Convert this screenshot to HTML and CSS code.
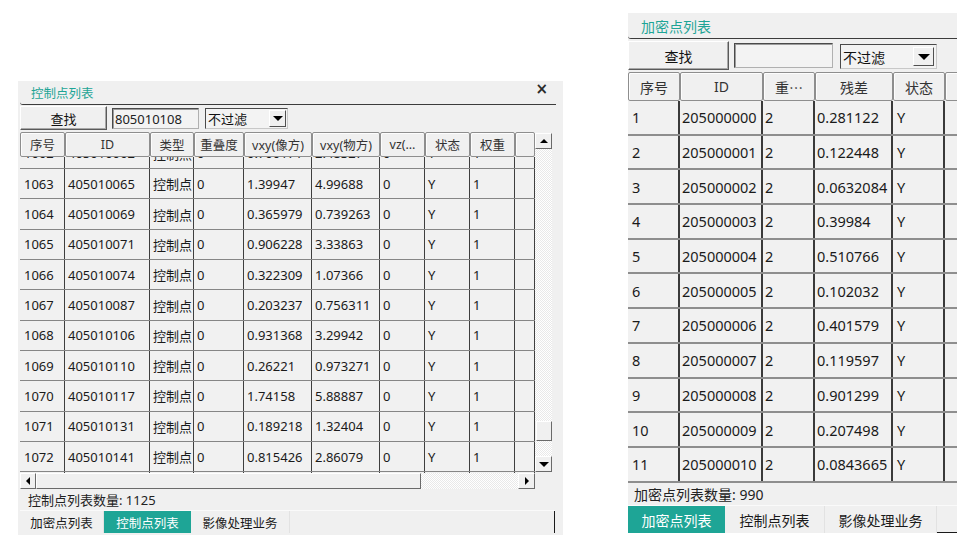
FILE: index.html
```html
<!DOCTYPE html>
<html lang="zh-CN">
<head>
<meta charset="utf-8">
<title>点列表</title>
<link rel="stylesheet" href="styles.css">
</head>
<body>
<div class="desk">
  <section class="panel panel-ctrl">
    <div class="titlebar"><span class="title">控制点列表</span><span class="close">×</span></div>
    <div class="toolbar">
      <button class="btn">查找</button>
      <div class="field">805010108</div>
      <div class="combo"><span class="combo-text">不过滤</span><span class="combo-btn"><i class="tri tri-down"></i></span></div>
    </div>
    <div class="tablebox">
      <div class="tablemain">
        <div class="hdr">
          <div class="hc">序号</div><div class="hc">ID</div><div class="hc">类型</div><div class="hc">重叠度</div><div class="hc">vxy(像方)</div><div class="hc">vxy(物方)</div><div class="hc">vz(…</div><div class="hc">状态</div><div class="hc">权重</div><div class="hc"></div>
        </div>
        <div class="body">
          <div class="rows">
            <div class="row"><div>1062</div><div>405010062</div><div>控制点</div><div>0</div><div>0.700171</div><div>2.48327</div><div>0</div><div>Y</div><div>1</div><div></div></div>
            <div class="row"><div>1063</div><div>405010065</div><div>控制点</div><div>0</div><div>1.39947</div><div>4.99688</div><div>0</div><div>Y</div><div>1</div><div></div></div>
            <div class="row"><div>1064</div><div>405010069</div><div>控制点</div><div>0</div><div>0.365979</div><div>0.739263</div><div>0</div><div>Y</div><div>1</div><div></div></div>
            <div class="row"><div>1065</div><div>405010071</div><div>控制点</div><div>0</div><div>0.906228</div><div>3.33863</div><div>0</div><div>Y</div><div>1</div><div></div></div>
            <div class="row"><div>1066</div><div>405010074</div><div>控制点</div><div>0</div><div>0.322309</div><div>1.07366</div><div>0</div><div>Y</div><div>1</div><div></div></div>
            <div class="row"><div>1067</div><div>405010087</div><div>控制点</div><div>0</div><div>0.203237</div><div>0.756311</div><div>0</div><div>Y</div><div>1</div><div></div></div>
            <div class="row"><div>1068</div><div>405010106</div><div>控制点</div><div>0</div><div>0.931368</div><div>3.29942</div><div>0</div><div>Y</div><div>1</div><div></div></div>
            <div class="row"><div>1069</div><div>405010110</div><div>控制点</div><div>0</div><div>0.26221</div><div>0.973271</div><div>0</div><div>Y</div><div>1</div><div></div></div>
            <div class="row"><div>1070</div><div>405010117</div><div>控制点</div><div>0</div><div>1.74158</div><div>5.88887</div><div>0</div><div>Y</div><div>1</div><div></div></div>
            <div class="row"><div>1071</div><div>405010131</div><div>控制点</div><div>0</div><div>0.189218</div><div>1.32404</div><div>0</div><div>Y</div><div>1</div><div></div></div>
            <div class="row"><div>1072</div><div>405010141</div><div>控制点</div><div>0</div><div>0.815426</div><div>2.86079</div><div>0</div><div>Y</div><div>1</div><div></div></div>
            <div class="row"><div>1073</div><div>405010150</div><div>控制点</div><div>0</div><div>0.512004</div><div>1.86213</div><div>0</div><div>Y</div><div>1</div><div></div></div>
          </div>
        </div>
      </div>
      <div class="vscroll">
        <div class="sbtn"><i class="tri tri-up"></i></div>
        <div class="vtrack">
          <div class="vgap"></div>
          <div class="vthumb"></div>
          <div class="vrest"></div>
        </div>
        <div class="sbtn"><i class="tri tri-down"></i></div>
      </div>
      <div class="hscroll">
        <div class="sbtn hbtn"><i class="tri tri-left"></i></div>
        <div class="hthumb"></div>
        <div class="htrack"></div>
        <div class="sbtn hbtn hbtn-r"><i class="tri tri-right"></i></div>
      </div>
      <div class="corner"></div>
    </div>
    <div class="status">控制点列表数量: 1125</div>
    <div class="tabs">
      <div class="tab">加密点列表</div>
      <div class="tab active">控制点列表</div>
      <div class="tab">影像处理业务</div>
      <div class="tab-fill"></div>
    </div>
  </section>

  <section class="panel panel-dense">
    <div class="titlebar"><span class="title">加密点列表</span></div>
    <div class="toolbar">
      <button class="btn">查找</button>
      <div class="field"></div>
      <div class="combo"><span class="combo-text">不过滤</span><span class="combo-btn"><i class="tri tri-down"></i></span></div>
    </div>
    <div class="tablemain">
      <div class="hdr">
        <div class="hc">序号</div><div class="hc">ID</div><div class="hc cjk">重…</div><div class="hc">残差</div><div class="hc">状态</div><div class="hc"></div>
      </div>
      <div class="body">
        <div class="rows">
          <div class="row"><div>1</div><div>205000000</div><div>2</div><div>0.281122</div><div>Y</div><div></div></div>
          <div class="row"><div>2</div><div>205000001</div><div>2</div><div>0.122448</div><div>Y</div><div></div></div>
          <div class="row"><div>3</div><div>205000002</div><div>2</div><div>0.0632084</div><div>Y</div><div></div></div>
          <div class="row"><div>4</div><div>205000003</div><div>2</div><div>0.39984</div><div>Y</div><div></div></div>
          <div class="row"><div>5</div><div>205000004</div><div>2</div><div>0.510766</div><div>Y</div><div></div></div>
          <div class="row"><div>6</div><div>205000005</div><div>2</div><div>0.102032</div><div>Y</div><div></div></div>
          <div class="row"><div>7</div><div>205000006</div><div>2</div><div>0.401579</div><div>Y</div><div></div></div>
          <div class="row"><div>8</div><div>205000007</div><div>2</div><div>0.119597</div><div>Y</div><div></div></div>
          <div class="row"><div>9</div><div>205000008</div><div>2</div><div>0.901299</div><div>Y</div><div></div></div>
          <div class="row"><div>10</div><div>205000009</div><div>2</div><div>0.207498</div><div>Y</div><div></div></div>
          <div class="row"><div>11</div><div>205000010</div><div>2</div><div>0.0843665</div><div>Y</div><div></div></div>
        </div>
      </div>
    </div>
    <div class="status">加密点列表数量: 990</div>
    <div class="tabs">
      <div class="tab active">加密点列表</div>
      <div class="tab">控制点列表</div>
      <div class="tab">影像处理业务</div>
      <div class="tab-fill"></div>
    </div>
  </section>
</div>
</body>
</html>
```

FILE: styles.css
```css
* { box-sizing: border-box; }

html, body {
  margin: 0;
  background: #ffffff;
}

body {
  width: 970px;
  height: 544px;
  overflow: hidden;
  font-family: "Noto Sans", "Noto Sans CJK SC", sans-serif;
  color: #1a1a1a;
}

.desk {
  display: flex;
  align-items: flex-start;
}

.panel {
  background: #f0f0f0;
  overflow: hidden;
  display: flex;
  flex-direction: column;
}

/* ---------- shared pieces ---------- */
.titlebar {
  display: flex;
  align-items: center;
  justify-content: space-between;
  border-bottom: 1px solid #3c3c3c;
  border-bottom-left-radius: 3px;
}
.title { color: #1ea596; }
.close { font-weight: bold; color: #2a2a2a; font-family: "DejaVu Sans", sans-serif; }

.toolbar { display: flex; align-items: flex-start; }

.btn {
  font: inherit;
  color: #111;
  background: #f0f0f0;
  border: 1px solid;
  border-color: #ffffff #5a5a5a #5a5a5a #ffffff;
  box-shadow: inset -1px -1px 0 #a8a8a8;
  padding: 0;
}

.field {
  background: #f3f3f3;
  border: 1px solid;
  border-color: #4a4a4a #b0b0b0 #b0b0b0 #4a4a4a;
  box-shadow: inset 1px 1px 0 #9c9c9c;
  display: flex;
  align-items: center;
  color: #222;
}

.combo {
  background: #f3f3f3;
  border: 1px solid;
  border-color: #4a4a4a #c8c8c8 #c8c8c8 #4a4a4a;
  display: flex;
  align-items: center;
  justify-content: space-between;
  color: #111;
}
.combo-btn {
  display: flex;
  align-items: center;
  justify-content: center;
  background: #f0f0f0;
  border: 1px solid;
  border-color: #ffffff #505050 #505050 #ffffff;
}

.tri { display: block; width: 0; height: 0; border-style: solid; }
.tri-down { border-width: 5px 5px 0 5px; border-color: #000 transparent transparent transparent; }
.tri-up { border-width: 0 4px 4px 4px; border-color: transparent transparent #000 transparent; }
.tri-left { border-width: 4px 4px 4px 0; border-color: transparent #000 transparent transparent; }
.tri-right { border-width: 4px 0 4px 4px; border-color: transparent transparent transparent #000; }

.hdr { display: grid; }
.hc {
  background: #f0f0f0;
  border: 1px solid #8e8e8e;
  border-radius: 2px;
  box-shadow: inset 1px 1px 0 #fdfdfd;
  display: flex;
  align-items: center;
  justify-content: center;
  white-space: nowrap;
  overflow: hidden;
  color: #333;
}
.cjk { font-family: "Noto Sans CJK SC", sans-serif; }

.body { overflow: hidden; background: #f1f1f1; }
.row {
  display: grid;
  border-bottom: 1px solid #868686;
}
.row > div {
  border-right: 1px solid #3f3f3f;
  display: flex;
  align-items: center;
  white-space: nowrap;
  overflow: hidden;
}

.status { display: flex; align-items: center; color: #222; }

.tabs {
  display: flex;
  border-top: 1px solid #fafafa;
}
.tab {
  display: flex;
  align-items: center;
  justify-content: center;
  background: #f0f0f0;
  border-right: 1px solid #e2e2e2;
  color: #1a1a1a;
}
.tab.active { background: #1ea596; color: #ffffff; border-right: 0; }
.tab-fill { flex: 1; }

/* ---------- control point panel (left) ---------- */
.panel-ctrl {
  width: 545px;
  height: 454px;
  margin: 81px 0 0 18px;
  padding: 0 8px 0 2px;
  font-size: 13px;
}
.panel-ctrl .titlebar {
  height: 24px;
  padding: 0 8px 0 11px;
  margin-right: -1px;
}
.panel-ctrl .title { font-size: 12.5px; }
.panel-ctrl .close { font-size: 15px; line-height: 1; margin-top: -7px; }
.panel-ctrl .toolbar { height: 24px; margin-top: 1px; gap: 5px; }
.panel-ctrl .btn { width: 87px; height: 24px; font-size: 13px; }
.panel-ctrl .field { width: 87px; height: 21px; margin-top: 2px; padding-left: 2px; font-size: 13px; }
.panel-ctrl .combo { width: 83px; height: 21px; margin-top: 2px; margin-left: 1px; padding-left: 2px; font-size: 13px; }
.panel-ctrl .combo-btn { width: 17px; height: 17px; margin-right: 1px; }
.panel-ctrl .combo-btn .tri-down { border-width: 5px 5px 0 5px; }

.tablebox {
  margin-top: 2px;
  display: grid;
  grid-template-columns: 515px 17px;
  grid-template-rows: 341px 16px;
}
.panel-ctrl .tablemain { display: flex; flex-direction: column; overflow: hidden; }
.panel-ctrl .hdr,
.panel-ctrl .row {
  grid-template-columns: 45px 85px 44px 50px 68px 68px 45px 45px 45px 20px;
}
.panel-ctrl .hdr { height: 25px; }
.panel-ctrl .hc { font-size: 12.5px; }
.panel-ctrl .body { flex: 1; }
.panel-ctrl .rows { margin-top: -18.3px; }
.panel-ctrl .row { height: 30.33px; }
.panel-ctrl .row > div { padding-left: 3px; }
.panel-ctrl .row > div:first-child { padding-left: 4px; }

.vscroll {
  display: flex;
  flex-direction: column;
  padding-top: 1px;
  padding-bottom: 1px;
}
.sbtn {
  flex: none;
  height: 16px;
  display: flex;
  align-items: center;
  justify-content: center;
  background: #f0f0f0;
  border: 1px solid;
  border-color: #ffffff #6a6a6a #6a6a6a #ffffff;
}
.vtrack { flex: 1; display: flex; flex-direction: column; }
.vgap, .vrest, .htrack {
  background: repeating-conic-gradient(#ffffff 0 25%, #e9e9e9 0 50%) 0 0 / 2px 2px;
}
.vgap { flex: 1; }
.vthumb {
  height: 20px;
  background: #f0f0f0;
  border: 1px solid;
  border-color: #ffffff #6a6a6a #6a6a6a #ffffff;
  margin: 0 0 0 1px;
}
.vrest { height: 15px; }

.hscroll { display: flex; }
.hbtn { width: 16px; height: 16px; }
.hbtn-r { width: 17px; }
.hthumb {
  width: 385px;
  background: #f0f0f0;
  border: 1px solid;
  border-color: #ffffff #6a6a6a #6a6a6a #ffffff;
}
.htrack { flex: 1; }
.corner { background: #f0f0f0; }

.panel-ctrl .status { height: 21px; padding-left: 8px; font-size: 13px; }
.panel-ctrl .tabs { height: 23px; font-size: 12.5px; }
.panel-ctrl .tab:nth-child(1) { width: 84px; }
.panel-ctrl .tab:nth-child(2) { width: 87px; }
.panel-ctrl .tab:nth-child(3) { width: 99px; }
.panel-ctrl .tab-fill { border-right: 1px solid #1a1a1a; }

/* ---------- dense point panel (right) ---------- */
.panel-dense {
  width: 329px;
  height: 520px;
  margin: 13px 0 0 65px;
  font-size: 14.5px;
}
.panel-dense .titlebar { height: 26px; padding-left: 13px; }
.panel-dense .title { font-size: 14px; }
.panel-dense .toolbar { height: 31px; margin-top: 2px; }
.panel-dense .btn { width: 101px; height: 29px; font-size: 14px; }
.panel-dense .field { width: 99px; height: 25px; margin: 2px 0 0 5px; }
.panel-dense .combo { width: 97px; height: 25px; margin: 3px 0 0 7px; padding-left: 2px; font-size: 14px; }
.panel-dense .combo-btn { width: 21px; height: 19px; margin-right: 2px; }
.panel-dense .combo-btn .tri-down { border-width: 6px 6px 0 6px; }

.panel-dense .tablemain { height: 411px; display: flex; flex-direction: column; overflow: hidden; }
.panel-dense .hdr,
.panel-dense .row {
  grid-template-columns: 52px 83px 52px 78px 52px 60px;
  width: 377px;
}
.panel-dense .hdr { height: 29px; }
.panel-dense .hc { font-size: 14px; }
.panel-dense .body { flex: 1; }
.panel-dense .row { height: 34.7px; border-bottom: 2px solid #8e8e8e; }
.panel-dense .row > div { padding-left: 4px; border-right: 2px solid #3a3a3a; }
.panel-dense .row > div:nth-child(2),
.panel-dense .row > div:nth-child(3),
.panel-dense .row > div:nth-child(4) { padding-left: 2px; }

.panel-dense .status { height: 22px; padding-left: 6px; font-size: 14px; }
.panel-dense .tabs { height: 28px; font-size: 14px; }
.panel-dense .tab:nth-child(1) { width: 97px; }
.panel-dense .tab:nth-child(2) { width: 100px; }
.panel-dense .tab:nth-child(3) { width: 112px; }
.panel-dense .tab-fill { border-bottom: 1px solid #1a1a1a; }
```
